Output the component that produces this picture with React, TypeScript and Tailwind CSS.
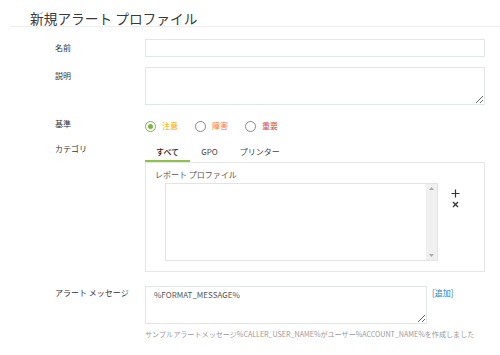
// New alert profile form

const LEVELS = [
  { label: '注意', color: 'text-[#f0a800]', checked: true },
  { label: '障害', color: 'text-[#f5793b]', checked: false },
  { label: '重要', color: 'text-[#e04848]', checked: false },
]

const TABS = ['すべて', 'GPO', 'プリンター']

function Radio({ checked }: { checked: boolean }) {
  return checked ? (
    <span className="flex h-[11px] w-[11px] items-center justify-center rounded-full border border-[#7cb342]">
      <span className="h-[5px] w-[5px] rounded-full bg-[#7cb342]" />
    </span>
  ) : (
    <span className="h-[11px] w-[11px] rounded-full border border-[#888]" />
  )
}

export default function App() {
  return (
    <div className="h-[355px] w-[500px] overflow-hidden bg-white font-['Noto_Sans_CJK_JP',sans-serif] text-[#333]">
      {/* Title */}
      <div className="ml-[10px] border-b border-[#eeeeee] pl-[20px] pt-[10px]">
        <h1 className="text-[13.7px] leading-[16px] font-normal text-[#3a3a3a]">新規アラート プロファイル</h1>
      </div>

      <div className="pl-[55px]">
        {/* Name */}
        <div className="mt-[12px] flex items-center">
          <div className="w-[90px] text-[8px] leading-[12px]">名前</div>
          <div className="h-[18px] w-[340px] border border-[#e3e6e8] bg-white" />
        </div>

        {/* Description */}
        <div className="mt-[10px] flex">
          <div className="w-[90px] pt-[3px] text-[8px] leading-[12px]">説明</div>
          <textarea readOnly className="block h-[38px] w-[340px] border border-[#e3e6e8] bg-white outline-none" />
        </div>

        {/* Level */}
        <div className="mt-[15px] flex h-[12px] items-center">
          <div className="-mt-[5px] w-[90px] text-[8px] leading-[12px]">基準</div>
          <div className="flex items-center gap-[17px]">
            {LEVELS.map(l => (
              <div key={l.label} className="flex items-center gap-[6px]">
                <Radio checked={l.checked} />
                <span className={`text-[8px] leading-[12px] ${l.color}`}>{l.label}</span>
              </div>
            ))}
          </div>
        </div>

        {/* Category */}
        <div className="mt-[12px] flex">
          <div className="-mt-[1px] w-[90px] text-[8px] leading-[12px]">カテゴリ</div>
          <div className="w-[340px]">
            <div className="flex">
              {TABS.map((t, i) => (
                <div
                  key={t}
                  className={`h-[18px] px-[11px] pt-[2px] text-[8px] leading-[12px] ${
                    i === 0 ? 'border-b-2 border-[#8bc34a] font-medium text-[#222]' : 'text-[#444]'
                  }`}
                >
                  {t}
                </div>
              ))}
            </div>
            <div className="h-[110px] border border-[#e6e6e6] pl-[9px] pt-[6px]">
              <div className="text-[8px] leading-[12px] text-[#555]">レポート プロファイル</div>
              <div className="mt-[2px] flex pl-[10px]">
                <div className="flex h-[78px] w-[273px] border border-[#e3e3e3]">
                  <div className="flex-1" />
                  <div className="flex w-[11px] flex-col items-center justify-between bg-[#f0f0f0] py-[3px]">
                    <svg width="5" height="3" viewBox="0 0 5 3"><path d="M0 3 L2.5 0 L5 3 Z" fill="#aaa" /></svg>
                    <svg width="5" height="3" viewBox="0 0 5 3"><path d="M0 0 L2.5 3 L5 0 Z" fill="#aaa" /></svg>
                  </div>
                </div>
                <div className="ml-[13px] mt-[6px] flex flex-col items-center gap-[3px]">
                  <svg width="9" height="9" viewBox="0 0 9 9">
                    <path d="M4.5 0.5 V8.5 M0.5 4.5 H8.5" stroke="#333" strokeWidth="1.2" />
                  </svg>
                  <svg width="7" height="7" viewBox="0 0 7 7">
                    <path d="M1 1 L6 6 M6 1 L1 6" stroke="#333" strokeWidth="1.3" />
                  </svg>
                </div>
              </div>
            </div>
          </div>
        </div>

        {/* Alert message */}
        <div className="mt-[14px] flex">
          <div className="w-[90px] pt-[1px] text-[8px] leading-[12px]">アラート メッセージ</div>
          <textarea
            readOnly
            defaultValue="%FORMAT_MESSAGE%"
            className="block h-[38px] w-[282px] border border-[#e3e6e8] bg-white px-[8px] pt-[2px] text-[8px] leading-[12px] text-[#555] outline-none"
          />
          <a className="ml-[5px] pt-[1px] text-[8px] leading-[12px] text-[#2a7ab8]">[追加]</a>
        </div>
        <div className="ml-[90px] mt-[4px] whitespace-nowrap text-[7.1px] leading-[12px] text-[#999]">
          サンプルアラートメッセージ%CALLER_USER_NAME%がユーザー%ACCOUNT_NAME%を作成しました
        </div>
      </div>
    </div>
  )
}
